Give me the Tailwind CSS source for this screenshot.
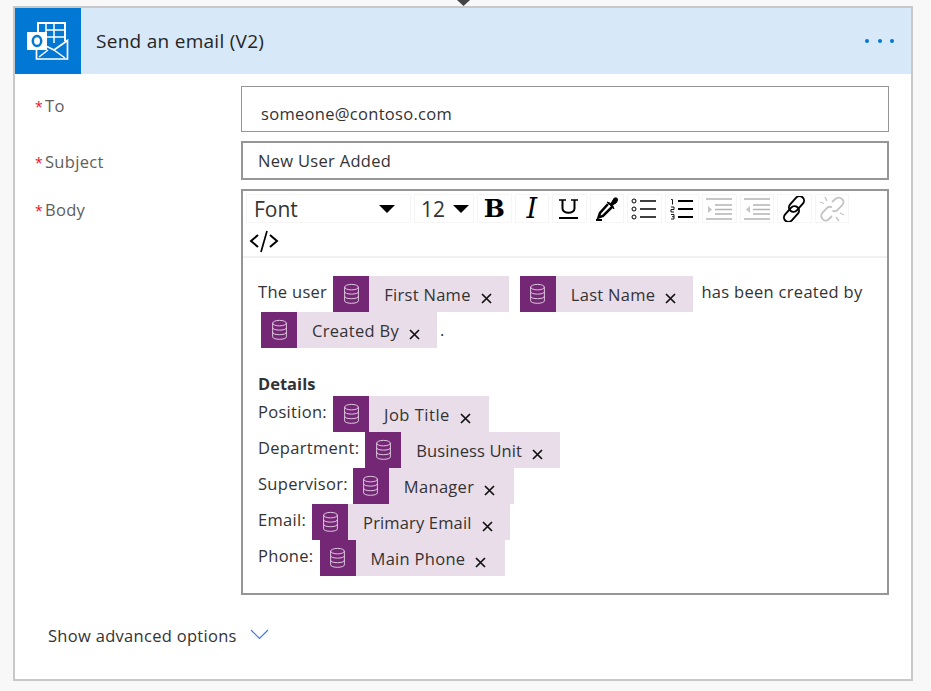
<!DOCTYPE html>
<html lang="en">
<head>
    <meta charset="utf-8">
    <title>Send an email (V2)</title>
    <script src="https://cdn.jsdelivr.net/npm/@tailwindcss/browser@4"></script>
</head>
<body class="bg-[#f8f8f8] h-[691px] overflow-hidden font-['Open_Sans','Noto_Sans',sans-serif] text-[#333]">
<svg class="absolute left-[457px] top-0" width="13" height="6" viewBox="0 0 13 6"><path d="M0 0H13L6.5 6Z" fill="#444"/></svg>

<!-- card -->
<div class="ml-[13px] mt-[6px] w-[900px] h-[675px] border-2 border-[#c8c8c8] bg-white">
    <div class="flex h-[66px] bg-[#d7e8f8]">
        <div class="w-[66px] h-[66px] bg-[#0078d4] flex items-center justify-center">
            <svg width="42" height="38" viewBox="0 0 42 38" fill="none" stroke="#fff" stroke-width="1.5">
                <path d="M11 10V1H38V19" stroke-width="2"/>
                <path d="M19 1V26M27 1V21M19 8H38M19 15H38"/>
                <path d="M9.500 28V37H40.500V18.500L27 28 20 24.500" stroke-width="1.700"/>
                <path d="M12 35L21 28M38 36L27 28"/>
                <rect x="0" y="10" width="20" height="18" fill="#fff" stroke="none"/>
                <ellipse cx="10" cy="19" rx="4.200" ry="5" stroke="#0078d4" stroke-width="2.500"/>
            </svg>
        </div>
        <div class="flex-1 flex items-center pl-[15px] text-[19px] tracking-[0.28px] text-[#252423]">Send an email (V2)</div>
        <div class="flex items-center gap-[8.5px] pr-[17px]">
            <span class="w-[4px] h-[4px] rounded-full bg-[#0078d4]"></span>
            <span class="w-[4px] h-[4px] rounded-full bg-[#0078d4]"></span>
            <span class="w-[4px] h-[4px] rounded-full bg-[#0078d4]"></span>
        </div>
    </div>

    <div class="pt-[12px] pl-[20px] pr-[22px] text-[16.5px] tracking-[0.3px]">
        <div class="flex">
            <label class="w-[206px] pt-[8px] text-[#605e5c]"><span class="text-[#e81123] text-[14px] mr-[2px]">*</span>To</label>
            <div class="w-[648px] h-[46px] border border-[#969696] pl-[19px] pt-[15px] leading-[24px]">someone@contoso.com</div>
        </div>
        <div class="flex mt-[9px]">
            <label class="w-[206px] pt-[9px] text-[#605e5c]"><span class="text-[#e81123] text-[14px] mr-[2px]">*</span>Subject</label>
            <div class="w-[648px] h-[39px] border-2 border-[#969696] pl-[15px] pt-[6px] leading-[24px]">New User Added</div>
        </div>
        <div class="flex mt-[9px]">
            <label class="w-[206px] pt-[9px] text-[#605e5c]"><span class="text-[#e81123] text-[14px] mr-[2px]">*</span>Body</label>
            <div class="w-[648px] h-[406px] border-2 border-[#969696]">
                <!-- toolbar -->
                <div class="h-[67px] border-b-2 border-[#f1f1f1] pl-[3px] pt-[3px] tracking-normal">
                    <div class="flex gap-[3px] h-[29px] items-stretch">
                        <div class="w-[165px] border border-[#f5f5f5] flex items-center justify-between pl-[7px] pr-[15px] text-[21px]"><span class="pt-[2px]">Font</span><span class="w-0 h-0 border-x-[8px] border-x-transparent border-t-[8px] border-t-black"></span></div>
                        <div class="w-[60px] border border-[#f5f5f5] flex items-center justify-between pl-[6px] pr-[4px] text-[21px]"><span class="pt-[2px]">12</span><span class="w-0 h-0 border-x-[8px] border-x-transparent border-t-[8px] border-t-black"></span></div>
                        <div class="w-[34.5px] border border-[#f5f5f5] flex items-center justify-center font-['DejaVu_Serif',serif] font-bold text-[25px] leading-none text-black">B</div>
                        <div class="w-[34.5px] border border-[#f5f5f5] flex items-center justify-center font-['DejaVu_Serif',serif] italic text-[27px] leading-none text-black">I</div>
                        <div class="w-[34.5px] border border-[#f5f5f5] flex items-center justify-center">
                            <svg width="20" height="20" viewBox="0 0 20 20" fill="none" stroke="#000" stroke-width="2"><path d="M0 1H7M12 1H19" stroke-width="1.500"/><path d="M3.500 1V9.500C3.500 15 15.500 15 15.500 9.500V1" stroke-width="2"/><path d="M0 19H19" stroke-width="2"/></svg>
                        </div>
                        <div class="w-[34.5px] border border-[#f5f5f5] flex items-center justify-center">
                            <svg width="24" height="24" viewBox="0 0 24 24" fill="none" stroke="#000"><path d="M13 7L5 16 3.500 20.500 8 19 17 10" stroke-width="2.500"/><path d="M12 5L19 12 17.500 8 21 6Q24 2 21.500 1T18 3L16 6.500Z" fill="#000" stroke-width="1"/><path d="M1 23H7" stroke-width="2"/></svg>
                        </div>
                        <div class="w-[34.5px] border border-[#f5f5f5] flex items-center justify-center">
                            <svg width="26" height="22" viewBox="0 0 26 22" fill="none" stroke="#000"><circle cx="3" cy="3" r="2"/><circle cx="3" cy="11" r="2"/><circle cx="3" cy="19" r="2"/><path d="M9 3H25M9 11H25M9 19H25" stroke-width="1.300"/></svg>
                        </div>
                        <div class="w-[34.5px] border border-[#f5f5f5] flex items-center justify-center">
                            <svg width="24" height="22" viewBox="0 0 24 22" fill="none" stroke="#000"><path d="M1 1.500H2.500V6.500M1 9H4V11.500H1V14H4M1 16.500H4V21H1M2 18.700H4" stroke-width=".9"/><path d="M8 3H23M8 11H23M8 19H23" stroke-width="2.200"/></svg>
                        </div>
                        <div class="w-[34.5px] border border-[#f5f5f5] flex items-center justify-center">
                            <svg width="28" height="24" viewBox="0 0 28 24" fill="none" stroke="#b4b4b4" stroke-width="1.700"><path d="M1 2H27M10 8H27M10 12.500H27M10 17H27M1 22H27"/><path d="M3 9L7 12.500 3 16Z" fill="#c4c4c4" stroke="none"/></svg>
                        </div>
                        <div class="w-[34.5px] border border-[#f5f5f5] flex items-center justify-center">
                            <svg width="28" height="24" viewBox="0 0 28 24" fill="none" stroke="#b4b4b4" stroke-width="1.700"><path d="M1 2H27M10 8H27M10 12.500H27M10 17H27M1 22H27"/><path d="M7 9L3 12.500 7 16Z" fill="#c4c4c4" stroke="none"/></svg>
                        </div>
                        <div class="w-[34.5px] border border-[#f5f5f5] flex items-center justify-center">
                            <svg width="26" height="26" viewBox="0 0 26 26" fill="none" stroke="#000" stroke-width="1.900"><rect x="11" y="-1" width="9" height="18" rx="4.500" transform="rotate(42 15.500 8)"/><rect x="6" y="9" width="9" height="18" rx="4.500" transform="rotate(42 10.500 18)"/></svg>
                        </div>
                        <div class="w-[34.5px] border border-[#f5f5f5] flex items-center justify-center">
                            <svg width="26" height="26" viewBox="0 0 26 26" fill="none" stroke="#c4c4c4" stroke-width="1.800"><path d="M13 6L17 2.500Q20 0.500 23 3T23 9.500L18 14.500Q15.500 16 13.500 14.500"/><path d="M13 11.500Q10.500 10 8.500 11.500L3.500 16.500Q1 20 3.500 23T9.500 23.500L13 20"/><path d="M6 1L8 5M1 6L5 7.500M17 21L20 25M21 17L25 19" stroke-width="1.300"/></svg>
                        </div>
                    </div>
                    <div class="h-[32px] pl-[3px] pt-[6px]">
                        <svg width="30" height="24" viewBox="0 0 30 24" fill="none" stroke="#000" stroke-width="2"><path d="M9 6L2 12 9 18M21 6L28 12 21 18"/><path d="M18 2L12 23" stroke-width="1.700"/></svg>
                    </div>
                </div>

                <!-- editor -->
                <div class="pl-[15px] pt-[18px] text-[#333] tracking-[0.3px]">
                    <div class="flex items-start h-[36px]">
                        <span class="leading-[32px]">The user</span>
                        <div class="flex h-[36px] bg-[#eaddea] ml-[6px]"><span class="w-[36px] bg-[#742774] flex items-center justify-center"><svg width="17" height="22" viewBox="0 0 18 24" fill="none" stroke="#e6d5e6"><ellipse cx="9" cy="4.500" rx="7.500" ry="3"/><path d="M1.500 4.500V19.500C1.500 23 16.500 23 16.500 19.500V4.500M1.500 9.500C1.500 13 16.500 13 16.500 9.500M1.500 14.500C1.500 18 16.500 18 16.500 14.500"/></svg></span><span class="pl-[15px] leading-[37px]">First Name</span><svg class="ml-[10px] mr-[17px] mt-[17px]" width="11" height="11" viewBox="0 0 11 11" stroke="#111" stroke-width="1.700"><path d="M1 1L10 10M10 1L1 10"/></svg></div>
                        <div class="flex h-[36px] bg-[#eaddea] ml-[11px]"><span class="w-[36px] bg-[#742774] flex items-center justify-center"><svg width="17" height="22" viewBox="0 0 18 24" fill="none" stroke="#e6d5e6"><ellipse cx="9" cy="4.500" rx="7.500" ry="3"/><path d="M1.500 4.500V19.500C1.500 23 16.500 23 16.500 19.500V4.500M1.500 9.500C1.500 13 16.500 13 16.500 9.500M1.500 14.500C1.500 18 16.500 18 16.500 14.500"/></svg></span><span class="pl-[15px] leading-[37px]">Last Name</span><svg class="ml-[10px] mr-[17px] mt-[17px]" width="11" height="11" viewBox="0 0 11 11" stroke="#111" stroke-width="1.700"><path d="M1 1L10 10M10 1L1 10"/></svg></div>
                        <span class="leading-[32px] ml-[8px]">has been created by</span>
                    </div>
                    <div class="flex items-start h-[36px] pl-[3px]">
                        <div class="flex h-[36px] bg-[#eaddea]"><span class="w-[36px] bg-[#742774] flex items-center justify-center"><svg width="17" height="22" viewBox="0 0 18 24" fill="none" stroke="#e6d5e6"><ellipse cx="9" cy="4.500" rx="7.500" ry="3"/><path d="M1.500 4.500V19.500C1.500 23 16.500 23 16.500 19.500V4.500M1.500 9.500C1.500 13 16.500 13 16.500 9.500M1.500 14.500C1.500 18 16.500 18 16.500 14.500"/></svg></span><span class="pl-[15px] leading-[37px]">Created By</span><svg class="ml-[10px] mr-[17px] mt-[17px]" width="11" height="11" viewBox="0 0 11 11" stroke="#111" stroke-width="1.700"><path d="M1 1L10 10M10 1L1 10"/></svg></div>
                        <span class="leading-[36px] ml-[3px]">.</span>
                    </div>
                    <div class="mt-[23px] font-bold leading-[25px] tracking-normal">Details</div>
                    <div class="flex items-start h-[36px]"><span class="leading-[32px] mr-[6px]">Position:</span><div class="flex h-[36px] bg-[#eaddea]"><span class="w-[36px] bg-[#742774] flex items-center justify-center"><svg width="17" height="22" viewBox="0 0 18 24" fill="none" stroke="#e6d5e6"><ellipse cx="9" cy="4.500" rx="7.500" ry="3"/><path d="M1.500 4.500V19.500C1.500 23 16.500 23 16.500 19.500V4.500M1.500 9.500C1.500 13 16.500 13 16.500 9.500M1.500 14.500C1.500 18 16.500 18 16.500 14.500"/></svg></span><span class="pl-[15px] leading-[37px] tracking-[0.5px]">Job Title</span><svg class="ml-[10px] mr-[18px] mt-[17px]" width="11" height="11" viewBox="0 0 11 11" stroke="#111" stroke-width="1.700"><path d="M1 1L10 10M10 1L1 10"/></svg></div></div>
                    <div class="flex items-start h-[36px]"><span class="leading-[32px] mr-[6px]">Department:</span><div class="flex h-[36px] bg-[#eaddea]"><span class="w-[36px] bg-[#742774] flex items-center justify-center"><svg width="17" height="22" viewBox="0 0 18 24" fill="none" stroke="#e6d5e6"><ellipse cx="9" cy="4.500" rx="7.500" ry="3"/><path d="M1.500 4.500V19.500C1.500 23 16.500 23 16.500 19.500V4.500M1.500 9.500C1.500 13 16.500 13 16.500 9.500M1.500 14.500C1.500 18 16.500 18 16.500 14.500"/></svg></span><span class="pl-[15px] leading-[37px] tracking-[0.1px]">Business Unit</span><svg class="ml-[10px] mr-[17px] mt-[17px]" width="11" height="11" viewBox="0 0 11 11" stroke="#111" stroke-width="1.700"><path d="M1 1L10 10M10 1L1 10"/></svg></div></div>
                    <div class="flex items-start h-[36px]"><span class="leading-[32px] mr-[5px]">Supervisor:</span><div class="flex h-[36px] bg-[#eaddea]"><span class="w-[36px] bg-[#742774] flex items-center justify-center"><svg width="17" height="22" viewBox="0 0 18 24" fill="none" stroke="#e6d5e6"><ellipse cx="9" cy="4.500" rx="7.500" ry="3"/><path d="M1.500 4.500V19.500C1.500 23 16.500 23 16.500 19.500V4.500M1.500 9.500C1.500 13 16.500 13 16.500 9.500M1.500 14.500C1.500 18 16.500 18 16.500 14.500"/></svg></span><span class="pl-[15px] leading-[37px]">Manager</span><svg class="ml-[10px] mr-[19px] mt-[17px]" width="11" height="11" viewBox="0 0 11 11" stroke="#111" stroke-width="1.700"><path d="M1 1L10 10M10 1L1 10"/></svg></div></div>
                    <div class="flex items-start h-[36px]"><span class="leading-[32px] mr-[6px]">Email:</span><div class="flex h-[36px] bg-[#eaddea]"><span class="w-[36px] bg-[#742774] flex items-center justify-center"><svg width="17" height="22" viewBox="0 0 18 24" fill="none" stroke="#e6d5e6"><ellipse cx="9" cy="4.500" rx="7.500" ry="3"/><path d="M1.500 4.500V19.500C1.500 23 16.500 23 16.500 19.500V4.500M1.500 9.500C1.500 13 16.500 13 16.500 9.500M1.500 14.500C1.500 18 16.500 18 16.500 14.500"/></svg></span><span class="pl-[15px] leading-[37px] tracking-[0.15px]">Primary Email</span><svg class="ml-[10px] mr-[17px] mt-[17px]" width="11" height="11" viewBox="0 0 11 11" stroke="#111" stroke-width="1.700"><path d="M1 1L10 10M10 1L1 10"/></svg></div></div>
                    <div class="flex items-start h-[36px]"><span class="leading-[32px] mr-[6px]">Phone:</span><div class="flex h-[36px] bg-[#eaddea]"><span class="w-[36px] bg-[#742774] flex items-center justify-center"><svg width="17" height="22" viewBox="0 0 18 24" fill="none" stroke="#e6d5e6"><ellipse cx="9" cy="4.500" rx="7.500" ry="3"/><path d="M1.500 4.500V19.500C1.500 23 16.500 23 16.500 19.500V4.500M1.500 9.500C1.500 13 16.500 13 16.500 9.500M1.500 14.500C1.500 18 16.500 18 16.500 14.500"/></svg></span><span class="pl-[15px] leading-[37px]">Main Phone</span><svg class="ml-[10px] mr-[19px] mt-[17px]" width="11" height="11" viewBox="0 0 11 11" stroke="#111" stroke-width="1.700"><path d="M1 1L10 10M10 1L1 10"/></svg></div></div>
                </div>
            </div>
        </div>
        <div class="flex items-center mt-[29px] pl-[13px]">
            <span>Show advanced options</span>
            <svg class="ml-[13px] -mt-[3px]" width="19" height="11" viewBox="0 0 19 11" fill="none" stroke="#3b79e8" stroke-width="1.200"><path d="M1 1L9.500 9.500 18 1"/></svg>
        </div>
    </div>
</div>
</body>
</html>
